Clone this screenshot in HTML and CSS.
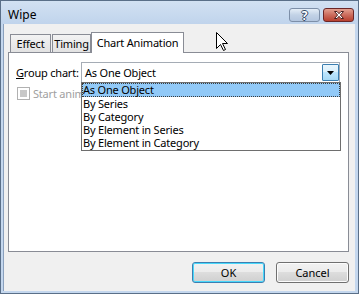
FILE: index.html
```html
<!DOCTYPE html>
<html lang="en">
<head>
    <meta charset="UTF-8">
    <title>Wipe</title>
    <link rel="stylesheet" href="styles.css">
</head>
<body>
    <div class="window">
        <div class="titlebar">
            <span class="title">Wipe</span>
            <div class="caption-buttons">
                <span class="cap-btn help">?</span>
                <span class="cap-btn close">
                    <svg width="14" height="10" viewBox="0 0 14 10">
                        <path d="M2.5 1.5 L5 1.5 L7 3.7 L9 1.5 L11.5 1.5 L8.4 5 L11.5 8.5 L9 8.5 L7 6.3 L5 8.5 L2.5 8.5 L5.6 5 Z" fill="#fff" stroke="#4a1f1f" stroke-width="1" stroke-linejoin="round"/>
                    </svg>
                </span>
            </div>
        </div>

        <div class="client">
            <div class="tabs">
                <div class="tab tab-effect">Effect</div>
                <div class="tab tab-timing">Timing</div>
                <div class="tab active">Chart Animation</div>
            </div>

            <div class="panel">
                <div class="field-row">
                    <label class="field-label"><u>G</u>roup chart:</label>
                    <div class="combo">
                        <span class="combo-value">As One Object</span>
                        <span class="drop-btn">
                            <svg width="7" height="4" viewBox="0 0 7 4"><path d="M0 0 H7 L3.5 4 Z" fill="#000"/></svg>
                        </span>
                        <ul class="drop-list">
                            <li class="selected">As One Object</li>
                            <li>By Series</li>
                            <li>By Category</li>
                            <li>By Element in Series</li>
                            <li>By Element in Category</li>
                        </ul>
                    </div>
                </div>
                <div class="check-row">
                    <span class="checkbox"></span>
                    <span class="check-label">Start animating background</span>
                </div>
            </div>

            <div class="buttons">
                <button class="btn default">OK</button>
                <button class="btn">Cancel</button>
            </div>
        </div>

        <svg class="cursor" width="13" height="20" viewBox="0 0 13 20">
            <path d="M0.5 0.5 L0.5 16.5 L4.5 12.5 L7.5 18.5 L9.5 17.5 L6.5 11.5 L11.5 11.5 Z" fill="#fff" stroke="#000" stroke-width="1" stroke-linejoin="miter"/>
        </svg>
    </div>
</body>
</html>
```

FILE: styles.css
```css
* {
    box-sizing: border-box;
}

body {
    margin: 0;
    width: 359px;
    height: 294px;
    font-family: "Noto Sans", sans-serif;
    font-size: 11px;
    letter-spacing: -0.2px;
    white-space: nowrap;
    color: #000;
    background: #fff;
}

.window {
    position: relative;
    width: 359px;
    height: 294px;
    background: #c4d7ee;
    border: 1px solid #5a6f88;
    display: flex;
    flex-direction: column;
}

.titlebar {
    height: 23px;
    display: flex;
    align-items: flex-start;
    justify-content: space-between;
    padding: 0 4px 0 7px;
    background: linear-gradient(#d2e1f2, #c0d4ec);
}

.title {
    font-size: 12px;
    line-height: 14px;
    margin-top: 7px;
    letter-spacing: 0;
}

.caption-buttons {
    display: flex;
    gap: 3px;
    margin-top: 7px;
}

.cap-btn {
    height: 14px;
    border-radius: 3px;
    display: flex;
    align-items: center;
    justify-content: center;
}

.help {
    width: 31px;
    border: 1px solid #7d8fa8;
    background: linear-gradient(#e4edf7, #c2d2e6 50%, #b3c6df);
    color: #fff;
    font-weight: bold;
    font-size: 12px;
    text-shadow: 1px 0 #354a66, -1px 0 #354a66, 0 1px #354a66, 0 -1px #354a66;
}

.close {
    width: 31px;
    border: 1px solid #6b2626;
    background: linear-gradient(#e3a08f, #cb6b5c 50%, #b8402f);
}

.client {
    flex: 1;
    margin: 0 3px 2px 2px;
    background: #f0f0f0;
    border-left: 1px solid #8aa0bd;
    display: flex;
    flex-direction: column;
    padding: 8px 6px 8px 4px;
}

.tabs {
    display: flex;
    align-items: flex-end;
    height: 20px;
    padding-left: 2px;
    position: relative;
    z-index: 1;
}

.tab {
    height: 18px;
    border: 1px solid #898c95;
    border-bottom: none;
    background: linear-gradient(#f3f3f3, #e2e2e2);
    display: flex;
    align-items: center;
    justify-content: center;
    margin-right: 1px;
}

.tab-effect {
    width: 41px;
}

.tab-timing {
    width: 39px;
}

.tab.active {
    width: 93px;
    height: 21px;
    margin-bottom: -1px;
    margin-left: -1px;
    padding-bottom: 2px;
    background: #fff;
}

.panel {
    height: 200px;
    background: #fff;
    border: 1px solid #898c95;
    padding: 9px 7px 0 7px;
}

.field-row {
    display: flex;
    align-items: center;
}

.field-label {
    width: 65px;
    flex-shrink: 0;
}

.combo {
    position: relative;
    width: 259px;
    height: 21px;
    flex-shrink: 0;
    border: 1px solid #a5acb5;
    display: flex;
    align-items: center;
    padding-left: 3px;
}

.combo-value {
    flex: 1;
}

.drop-btn {
    width: 17px;
    height: 17px;
    border: 1px solid #3c7fb1;
    border-radius: 1px;
    background: linear-gradient(#eaf6fd, #d9f0fc 50%, #bee6fd 50%, #a7d9f5);
    display: flex;
    align-items: center;
    justify-content: center;
}

.drop-list {
    position: absolute;
    top: 19px;
    left: -1px;
    width: 260px;
    margin: 0;
    padding: 0 0 1px 0;
    list-style: none;
    background: #fff;
    border: 1px solid #6e6e6e;
    z-index: 2;
}

.drop-list li {
    height: 13px;
    line-height: 13px;
    padding-left: 1px;
}

.drop-list li.selected {
    height: 14px;
    background: #91c9f7;
    outline: 1px dotted #3b3b3b;
    outline-offset: -1px;
}

.check-row {
    display: flex;
    align-items: center;
    margin-top: 3px;
    padding-left: 1px;
    color: #a0a0a0;
}

.checkbox {
    width: 13px;
    height: 13px;
    border: 1px solid #b1b1b1;
    background: #fff;
    margin-right: 3px;
    box-shadow: inset 0 0 0 2px #fff, inset 0 0 0 8px #c8c8c8;
}

.buttons {
    display: flex;
    justify-content: flex-end;
    gap: 11px;
    margin-top: 10px;
}

.btn {
    width: 73px;
    height: 21px;
    font-family: inherit;
    font-size: 11px;
    border: 1px solid #707070;
    border-radius: 3px;
    background: linear-gradient(#f2f2f2, #ebebeb 50%, #dddddd 50%, #cfcfcf);
    box-shadow: inset 0 0 0 1px #fcfcfc;
    padding: 0;
}

.btn.default {
    border-color: #3c7fb1;
    box-shadow: inset 0 0 0 1px #48d8fb;
}

.cursor {
    position: absolute;
    left: 215px;
    top: 31px;
}
```
